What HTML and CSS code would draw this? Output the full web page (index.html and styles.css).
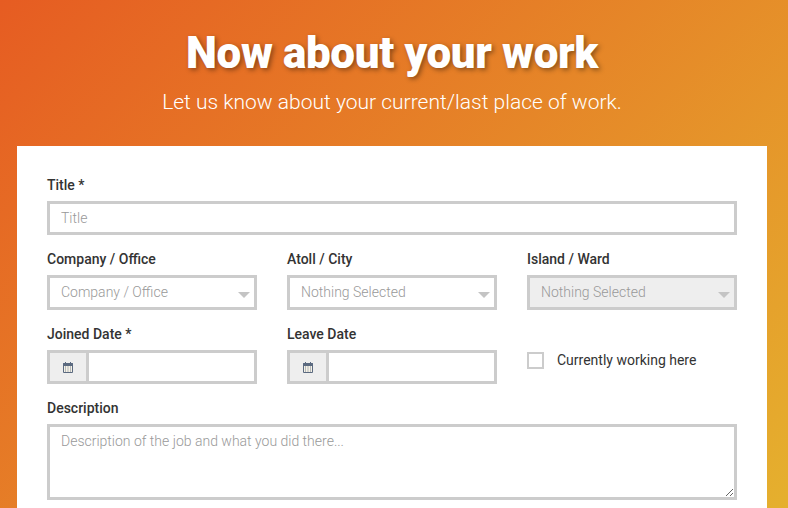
FILE: index.html
```html
<!DOCTYPE html>
<html>

<head>
    <link rel="stylesheet" href="styles.css">
</head>

<body>
    <div class="page">
        <div class="page-header">
            <h1>Now about your work</h1>
            <p>Let us know about your current/last place of work.</p>
        </div>

        <form class="form-card">
            <!-- Title -->
            <div class="form-group">
                <label class="field-label">Title *</label>
                <input class="field-input" type="text" placeholder="Title">
            </div>

            <!-- Location -->
            <div class="form-row">
                <div class="form-group">
                    <label class="field-label">Company / Office</label>
                    <div class="select-box">
                        <span>Company / Office</span>
                        <span class="select-caret"></span>
                    </div>
                </div>
                <div class="form-group">
                    <label class="field-label">Atoll / City</label>
                    <div class="select-box">
                        <span>Nothing Selected</span>
                        <span class="select-caret"></span>
                    </div>
                </div>
                <div class="form-group">
                    <label class="field-label">Island / Ward</label>
                    <div class="select-box disabled">
                        <span>Nothing Selected</span>
                        <span class="select-caret"></span>
                    </div>
                </div>
            </div>

            <!-- Dates -->
            <div class="form-row">
                <div class="form-group">
                    <label class="field-label">Joined Date *</label>
                    <div class="date-input">
                        <span class="date-addon">
                            <svg width="10" height="11" viewBox="0 0 10 11" fill="none" xmlns="http://www.w3.org/2000/svg">
                                <path d="M0.5 1.5H9.5V10.5H0.5Z" fill="#f4f1e6" stroke="#5b6a80"/>
                                <path d="M0.5 1.5H9.5V3.5H0.5Z" fill="#5b6a80" stroke="#5b6a80"/>
                                <path d="M2 5H3M4.5 5H5.5M7 5H8M2 7H3M4.5 7H5.5M7 7H8M2 9H3M4.5 9H5.5M7 9H8" stroke="#77808e"/>
                                <path d="M2.5 0V2M7.5 0V2" stroke="#5b6a80"/>
                            </svg>
                        </span>
                        <input class="date-field" type="text">
                    </div>
                </div>
                <div class="form-group">
                    <label class="field-label">Leave Date</label>
                    <div class="date-input">
                        <span class="date-addon">
                            <svg width="10" height="11" viewBox="0 0 10 11" fill="none" xmlns="http://www.w3.org/2000/svg">
                                <path d="M0.5 1.5H9.5V10.5H0.5Z" fill="#f4f1e6" stroke="#5b6a80"/>
                                <path d="M0.5 1.5H9.5V3.5H0.5Z" fill="#5b6a80" stroke="#5b6a80"/>
                                <path d="M2 5H3M4.5 5H5.5M7 5H8M2 7H3M4.5 7H5.5M7 7H8M2 9H3M4.5 9H5.5M7 9H8" stroke="#77808e"/>
                                <path d="M2.5 0V2M7.5 0V2" stroke="#5b6a80"/>
                            </svg>
                        </span>
                        <input class="date-field" type="text">
                    </div>
                </div>
                <div class="check-group">
                    <span class="check-box"></span>
                    <span class="check-label">Currently working here</span>
                </div>
            </div>

            <!-- Description -->
            <div class="form-group">
                <label class="field-label">Description</label>
                <textarea class="field-textarea" placeholder="Description of the job and what you did there..."></textarea>
            </div>
        </form>
    </div>
</body>

</html>
```

FILE: styles.css
```css
html,
body {
    margin: 0;
    height: 100%;
    overflow: hidden;
}

body {
    font-family: Roboto, "Liberation Sans", sans-serif;
    font-size: 14px;
    color: #333;
}

.page {
    height: 100%;
    padding: 0 21px 0 17px;
    box-sizing: border-box;
    background: linear-gradient(135deg, #e65c22 0%, #e5b02e 100%);
    overflow: hidden;
}

.page-header {
    height: 146px;
    padding-top: 27px;
    box-sizing: border-box;
    text-align: center;
    color: #fff;
}

.page-header h1 {
    margin: 0;
    font-size: 44px;
    line-height: 52px;
    font-weight: 900;
    letter-spacing: -0.4px;
    text-shadow: 2px 2px 5px rgba(0, 0, 0, 0.4);
}

.page-header p {
    margin: 9px 0 0;
    font-size: 21px;
    line-height: 28px;
    font-weight: 300;
}

.form-card {
    background: #fff;
    padding: 31px 30px 60px;
}

.form-row {
    display: grid;
    grid-template-columns: repeat(3, 210px);
    column-gap: 30px;
}

.form-group {
    margin-bottom: 16px;
}

.field-label {
    display: block;
    margin-bottom: 8px;
    font-size: 14px;
    line-height: 16px;
    font-weight: 500;
    color: #333;
}

.field-input,
.field-textarea,
.select-box,
.date-input {
    display: block;
    width: 100%;
    box-sizing: border-box;
    border: 3px solid #ccc;
    background: #fff;
    font-family: inherit;
    font-size: 14px;
    outline: none;
}

.field-input {
    height: 34px;
    padding: 0 11px;
}

.field-input::placeholder,
.field-textarea::placeholder {
    color: #999;
    font-weight: 300;
    opacity: 1;
}

.select-box {
    height: 35px;
    padding: 0 4px 1px 11px;
    display: flex;
    justify-content: space-between;
    align-items: center;
    color: #999;
    font-weight: 300;
}

.select-box.disabled {
    background: #eee;
}

.select-caret {
    width: 0;
    height: 0;
    margin-top: 5px;
    border-left: 6px solid transparent;
    border-right: 6px solid transparent;
    border-top: 6px solid #c4c4c4;
}

.date-input {
    height: 34px;
    display: flex;
}

.date-addon {
    width: 36px;
    flex: none;
    display: flex;
    align-items: center;
    justify-content: center;
    background: #eee;
    border-right: 3px solid #ccc;
}

.date-field {
    flex: 1;
    min-width: 0;
    border: 0;
    outline: none;
}

.check-group {
    display: flex;
    align-items: center;
    height: 34px;
    margin-top: 17px;
}

.check-box {
    width: 17px;
    height: 17px;
    box-sizing: border-box;
    border: 2px solid #ccc;
    margin-right: 13px;
}

.check-label {
    font-size: 14px;
    color: #333;
}

.field-textarea {
    height: 76px;
    padding: 6px 11px;
    resize: vertical;
}
```
